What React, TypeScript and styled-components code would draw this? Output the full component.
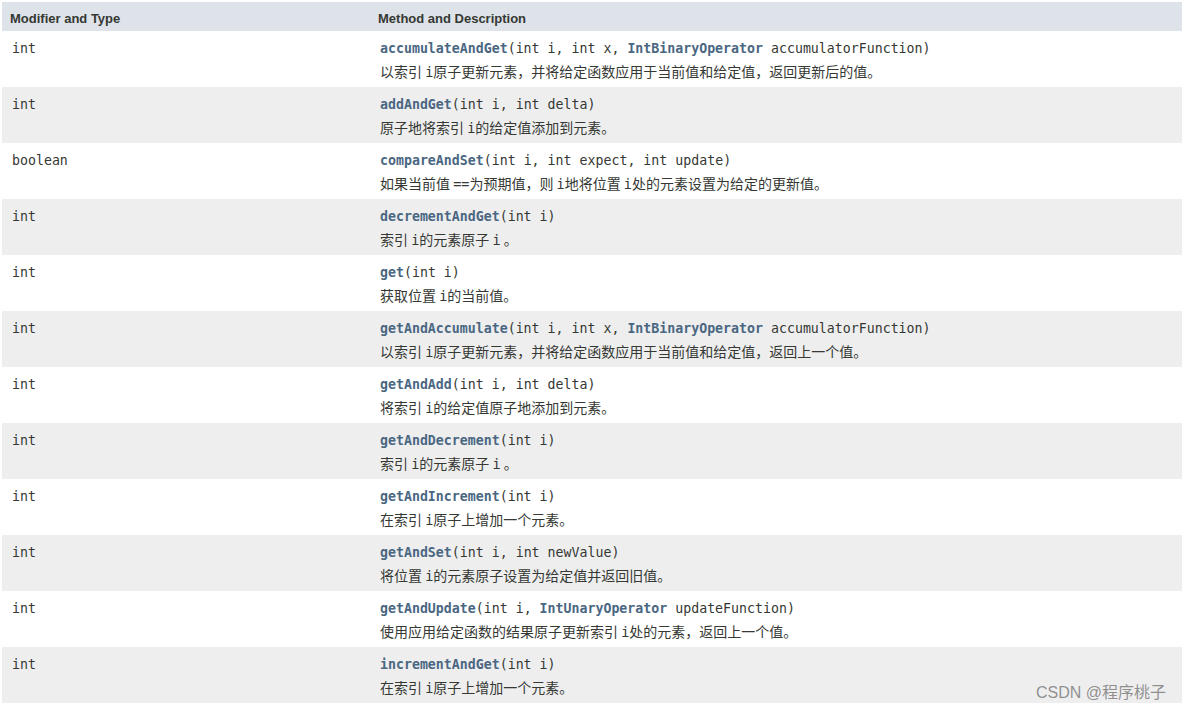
import React from "react";
import styled, { createGlobalStyle } from "styled-components";

const GlobalStyle = createGlobalStyle`
  html, body {
    margin: 0;
    padding: 0;
    background: #fff;
    overflow: hidden;
  }
  body {
    font-family: "Liberation Sans", Arial, sans-serif;
    color: #353833;
  }
`;

const Page = styled.div`
  position: relative;
  padding: 2px 0 0 2px;
  height: 709px;
  overflow: hidden;
`;

const SummaryTable = styled.table`
  width: 100%;
  border-collapse: collapse;
  table-layout: fixed;
`;

const HeadCell = styled.th<{ $width?: number }>`
  box-sizing: border-box;
  width: ${(p) => (p.$width ? `${p.$width}px` : "auto")};
  height: 29px;
  padding: 4px 8px 0;
  background: #dee3e9;
  color: #353833;
  font-size: 13px;
  font-weight: bold;
  text-align: left;
  vertical-align: middle;
`;

const Row = styled.tr<{ $alt: boolean }>`
  background: ${(p) => (p.$alt ? "#eeeeef" : "#ffffff")};
`;

const Cell = styled.td`
  box-sizing: border-box;
  height: 56px;
  padding: 8px 10px 6px;
  vertical-align: top;
`;

const Mono = styled.div`
  height: 20px;
  font-family: "DejaVu Sans Mono", "Liberation Mono", monospace;
  font-size: 13.25px;
  line-height: 20px;
  color: #353833;
  white-space: nowrap;
  overflow: hidden;
`;

const LinkName = styled.span`
  font-weight: bold;
  color: #4a6782;
`;

const Desc = styled.div`
  height: 20px;
  margin-top: 2px;
  font-family: "Noto Sans CJK SC", "Liberation Sans", sans-serif;
  font-size: 14px;
  line-height: 20px;
  color: #353833;
  white-space: nowrap;
  overflow: hidden;
`;

const Code = styled.code`
  font-family: "DejaVu Sans Mono", "Liberation Mono", monospace;
  font-size: 13.5px;
  line-height: 20px;
`;

const Watermark = styled.div`
  position: absolute;
  right: 16px;
  bottom: 8px;
  font-family: "Liberation Sans", "Noto Sans CJK SC", sans-serif;
  font-size: 16px;
  color: rgba(110, 110, 110, 0.75);
  pointer-events: none;
`;

type Param = { type: string; name: string; link?: boolean };

interface IMethod {
  ret: string;
  name: string;
  params: Param[];
  desc: string;
}

const methods: IMethod[] = [
  {
    ret: "int",
    name: "accumulateAndGet",
    params: [
      { type: "int", name: "i" },
      { type: "int", name: "x" },
      { type: "IntBinaryOperator", name: "accumulatorFunction", link: true },
    ],
    desc: "以索引 `i`原子更新元素，并将给定函数应用于当前值和给定值，返回更新后的值。",
  },
  {
    ret: "int",
    name: "addAndGet",
    params: [
      { type: "int", name: "i" },
      { type: "int", name: "delta" },
    ],
    desc: "原子地将索引 `i`的给定值添加到元素。",
  },
  {
    ret: "boolean",
    name: "compareAndSet",
    params: [
      { type: "int", name: "i" },
      { type: "int", name: "expect" },
      { type: "int", name: "update" },
    ],
    desc: "如果当前值 `==`为预期值，则 `i`地将位置 `i`处的元素设置为给定的更新值。",
  },
  {
    ret: "int",
    name: "decrementAndGet",
    params: [{ type: "int", name: "i" }],
    desc: "索引 `i`的元素原子 `i` 。",
  },
  {
    ret: "int",
    name: "get",
    params: [{ type: "int", name: "i" }],
    desc: "获取位置 `i`的当前值。",
  },
  {
    ret: "int",
    name: "getAndAccumulate",
    params: [
      { type: "int", name: "i" },
      { type: "int", name: "x" },
      { type: "IntBinaryOperator", name: "accumulatorFunction", link: true },
    ],
    desc: "以索引 `i`原子更新元素，并将给定函数应用于当前值和给定值，返回上一个值。",
  },
  {
    ret: "int",
    name: "getAndAdd",
    params: [
      { type: "int", name: "i" },
      { type: "int", name: "delta" },
    ],
    desc: "将索引 `i`的给定值原子地添加到元素。",
  },
  {
    ret: "int",
    name: "getAndDecrement",
    params: [{ type: "int", name: "i" }],
    desc: "索引 `i`的元素原子 `i` 。",
  },
  {
    ret: "int",
    name: "getAndIncrement",
    params: [{ type: "int", name: "i" }],
    desc: "在索引 `i`原子上增加一个元素。",
  },
  {
    ret: "int",
    name: "getAndSet",
    params: [
      { type: "int", name: "i" },
      { type: "int", name: "newValue" },
    ],
    desc: "将位置 `i`的元素原子设置为给定值并返回旧值。",
  },
  {
    ret: "int",
    name: "getAndUpdate",
    params: [
      { type: "int", name: "i" },
      { type: "IntUnaryOperator", name: "updateFunction", link: true },
    ],
    desc: "使用应用给定函数的结果原子更新索引 `i`处的元素，返回上一个值。",
  },
  {
    ret: "int",
    name: "incrementAndGet",
    params: [{ type: "int", name: "i" }],
    desc: "在索引 `i`原子上增加一个元素。",
  },
];

// `...` marks code inside the description
function renderDesc(text: string) {
  return text.split("`").map((part, idx) =>
    idx % 2 === 1 ? <Code key={idx}>{part}</Code> : <span key={idx}>{part}</span>
  );
}

function App() {
  return (
    <Page>
      <GlobalStyle />
      <SummaryTable>
        <thead>
          <tr>
            <HeadCell $width={368}>Modifier and Type</HeadCell>
            <HeadCell>Method and Description</HeadCell>
          </tr>
        </thead>
        <tbody>
          {methods.map((m, i) => (
            <Row key={m.name} $alt={i % 2 === 1}>
              <Cell>
                <Mono>{m.ret}</Mono>
              </Cell>
              <Cell>
                <Mono>
                  <LinkName>{m.name}</LinkName>(
                  {m.params.map((p, j) => (
                    <React.Fragment key={p.name}>
                      {j > 0 && ", "}
                      {p.link ? <LinkName>{p.type}</LinkName> : p.type} {p.name}
                    </React.Fragment>
                  ))}
                  )
                </Mono>
                <Desc>{renderDesc(m.desc)}</Desc>
              </Cell>
            </Row>
          ))}
        </tbody>
      </SummaryTable>
      <Watermark>CSDN @程序桃子</Watermark>
    </Page>
  );
}

export default App;
